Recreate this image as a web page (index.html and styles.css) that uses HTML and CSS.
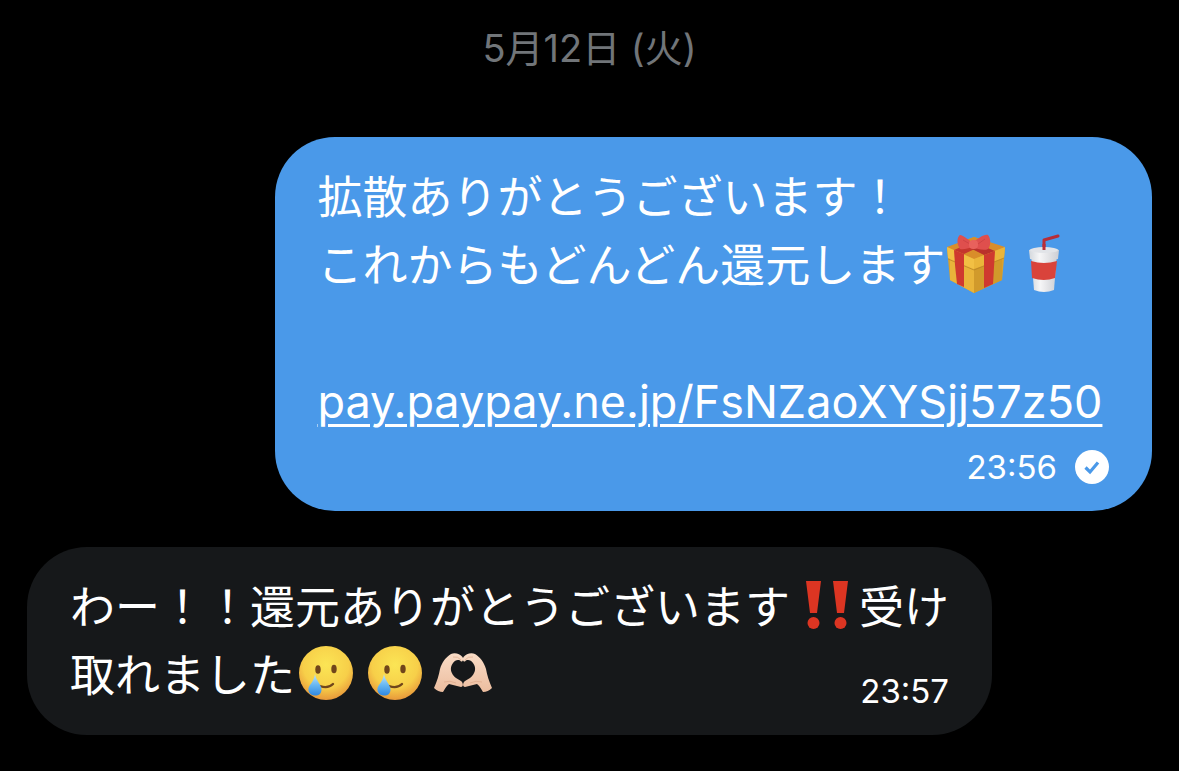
FILE: index.html
```html
<!DOCTYPE html>
<html lang="ja">
<head>
    <meta charset="UTF-8">
    <meta name="viewport" content="width=device-width, initial-scale=1.0">
    <title>メッセージ</title>
    <link rel="stylesheet" href="styles.css">
</head>
<body>
    <!-- shared emoji drawings -->
    <svg class="defs" aria-hidden="true">
        <defs>
            <radialGradient id="skin" cx="0.5" cy="0.35" r="0.65">
                <stop offset="0" stop-color="#fbe555"/>
                <stop offset="0.65" stop-color="#f7cf49"/>
                <stop offset="1" stop-color="#e8983a"/>
            </radialGradient>
            <linearGradient id="drop" x1="0" y1="0" x2="0" y2="1">
                <stop offset="0" stop-color="#c5e6fa"/>
                <stop offset="0.5" stop-color="#69b8f3"/>
                <stop offset="1" stop-color="#2f87df"/>
            </linearGradient>
            <linearGradient id="cup" x1="0" y1="0" x2="1" y2="0">
                <stop offset="0" stop-color="#d3d7dc"/>
                <stop offset="0.35" stop-color="#f6f6f7"/>
                <stop offset="1" stop-color="#cdced3"/>
            </linearGradient>
            <linearGradient id="hand" x1="0" y1="0" x2="0" y2="1">
                <stop offset="0" stop-color="#f9dcc6"/>
                <stop offset="1" stop-color="#ecbd9f"/>
            </linearGradient>
            <symbol id="face" viewBox="0 0 60 60">
                <circle cx="30" cy="30" r="27" fill="url(#skin)"/>
                <ellipse cx="22" cy="26.500" rx="2.700" ry="4.300" fill="#70451b"/>
                <ellipse cx="38" cy="26" rx="2.700" ry="4.300" fill="#70451b"/>
                <path d="M24 43 Q32 46 37 41" fill="none" stroke="#70451b" stroke-width="2.400" stroke-linecap="round"/>
                <path d="M19 31 C20 38 26 42 25.500 47 C25 52 21 53 18.500 52.500 C14 52 12 49 12.500 45 C14 41 18 38 19 31Z" fill="url(#drop)"/>
            </symbol>
            <g id="palm">
                <path d="M0 45 C3 38 5 32 6 26 C8 19 12 14 17 11 C21 9 26 11 28.500 14 C30 17 28.500 19 27 18.500 C25 16 21 17 19 20 C15 25 17 31 22 35 L27 38 C29.500 40 29.500 44 27 44 C23 43 19 42 15 41 C12 43 11 46 9 49 Q4 49 0 45Z" fill="url(#hand)"/>
                <path d="M19 14 Q24 13 27 17 M10 39 Q16 37 22 40" fill="none" stroke="#d9a283" stroke-width="0.600"/>
            </g>
        </defs>
    </svg>

    <main class="chat">
        <time class="date" datetime="05-12">5月12日 (火)</time>

        <article class="bubble sent">
            <p class="text">拡散ありがとうございます！<br>これからもどんどん還元します<svg class="emoji" viewBox="0 0 60 60" role="img" aria-label="プレゼント">
                    <path d="M1 15 L28 4 L59 15 L56 47 L28 60 L4 47Z" fill="#dba12d"/>
                    <path d="M4 25 L28 34 V60 L4 47Z" fill="#e9b43a"/>
                    <path d="M28 34 L56 25 V47 L28 60Z" fill="#d19a2b"/>
                    <path d="M1 14 L28 4 L59 14 L28 26Z" fill="#d98d2a"/>
                    <path d="M1 14 L28 26 V36 L2 25Z" fill="#f2c044"/>
                    <path d="M28 26 L59 14 L58 25 L28 36Z" fill="#eab53a"/>
                    <path d="M2 26 L28 37 L58 25" fill="none" stroke="#b98526" stroke-width="0.800"/>
                    <path d="M8 17 L18 21 V54 L11 51 L9 32Z" fill="#cf392f"/>
                    <path d="M38 22 L49 18 L47 51 L38 55Z" fill="#cf392f"/>
                    <path d="M8 17 L22 11 L33 14 L18 21Z" fill="#c5352d"/>
                    <path d="M49 18 L32 11 L24 15 L38 22Z" fill="#b9312b"/>
                    <path d="M27 10 C20 5 14 0 13 3 C10 7 12 13 14 16 C18 17 22 15 27 14 C31 16 38 18 42 16 C45 12 45 6 42 2 C38 1 31 6 27 10Z" fill="#df4f4d"/>
                    <path d="M17 7 L24 11 M39 6 L32 11" fill="none" stroke="#c73e40" stroke-width="0.700"/>
                    <rect x="23" y="7" width="9" height="9" rx="4" fill="#e8615c"/>
                </svg><svg class="emoji" viewBox="0 0 60 60" role="img" aria-label="ドリンク">
                    <path d="M29 17 V7 L43 3" fill="none" stroke="#b72d37" stroke-width="3" stroke-linejoin="round" stroke-linecap="round"/>
                    <path d="M16 20 H42 L39 57 Q29 61 19 57Z" fill="url(#cup)"/>
                    <path d="M16 28 Q29 32 42 28 L40 45 Q29 49 17 45Z" fill="#d9433b"/>
                    <path d="M14 17 Q29 12 44 17 L43 26 Q29 30 15 26Z" fill="url(#cup)"/>
                    <ellipse cx="29" cy="17" rx="14" ry="3" fill="#e2e4e8"/>
                    <path d="M29 17 V11" fill="none" stroke="#b72d37" stroke-width="3"/>
                </svg><br><br><a class="link" href="https://pay.paypay.ne.jp/FsNZaoXYSjj57z50">pay.paypay.ne.jp/FsNZaoXYSjj57z50</a></p>
            <footer class="meta">
                <time datetime="23:56">23:56</time>
                <svg class="check" viewBox="0 0 34 34" role="img" aria-label="送信済み">
                    <circle cx="17" cy="17" r="17" fill="#fff"/>
                    <path d="M10.500 17.500 L15 22 L23 12.500" fill="none" stroke="#4a99e9" stroke-width="3.200"/>
                </svg>
            </footer>
        </article>

        <article class="bubble received">
            <p class="text">わー！！還元ありがとうございます<svg class="emoji" viewBox="0 0 60 60" role="img" aria-label="びっくりマーク">
                    <g fill="#dc3522">
                        <path d="M15 6 H30 L26 38 H19Z"/>
                        <circle cx="22.500" cy="48" r="6"/>
                        <path d="M42 6 H57 L53 38 H46Z"/>
                        <circle cx="49.500" cy="48" r="6"/>
                    </g>
                </svg>受け<br>取れました<svg class="emoji" role="img" aria-label="泣き笑い"><use href="#face"/></svg><svg class="emoji" role="img" aria-label="泣き笑い"><use href="#face"/></svg><svg class="emoji" viewBox="0 0 60 60" role="img" aria-label="ハートの手">
                    <use href="#palm"/>
                    <use href="#palm" transform="translate(58 0) scale(-1 1)"/>
                </svg></p>
            <footer class="meta">
                <time datetime="23:57">23:57</time>
            </footer>
        </article>
    </main>
</body>
</html>
```

FILE: styles.css
```css
* {
    margin: 0;
    padding: 0;
    box-sizing: border-box;
}
body {
    background: #000;
    color: #fff;
    font-family: Inter, "Noto Sans CJK JP", sans-serif;
}
.defs {
    position: absolute;
    width: 0;
    height: 0;
}
.chat {
    display: flex;
    flex-direction: column;
    padding: 24px 27px 36px;
}
.date {
    align-self: center;
    margin-bottom: 65px;
    color: #717579;
    font-size: 38px;
    line-height: 48px;
}
.bubble {
    padding: 24px 43px;
    border-radius: 60px;
}
.sent {
    align-self: flex-end;
    width: 78%;
    background: #4a99e9;
}
.received {
    display: grid;
    align-self: flex-start;
    margin-top: 36px;
    background: #16181a;
}
.text {
    font-family: "Noto Sans CJK JP", sans-serif;
    font-size: 45px;
    line-height: 68px;
}
.link {
    color: #fff;
    font-family: Inter, sans-serif;
    line-height: 48px;
    text-decoration-thickness: 3px;
    text-underline-offset: 6px;
}
.emoji {
    width: 60px;
    height: 60px;
    margin: 4px 8px 4px 1px;
    vertical-align: top;
}
.meta {
    display: flex;
    justify-content: flex-end;
    align-items: center;
    gap: 18px;
    font-size: 33px;
    line-height: 40px;
}
.sent .meta {
    margin-top: 14px;
}
/* the time shares the last line of the text */
.received .text,
.received .meta {
    grid-area: 1 / 1;
}
.received .text {
    margin-bottom: 4px;
}
.received .meta {
    align-self: end;
}
.check {
    width: 34px;
    height: 34px;
}
```
